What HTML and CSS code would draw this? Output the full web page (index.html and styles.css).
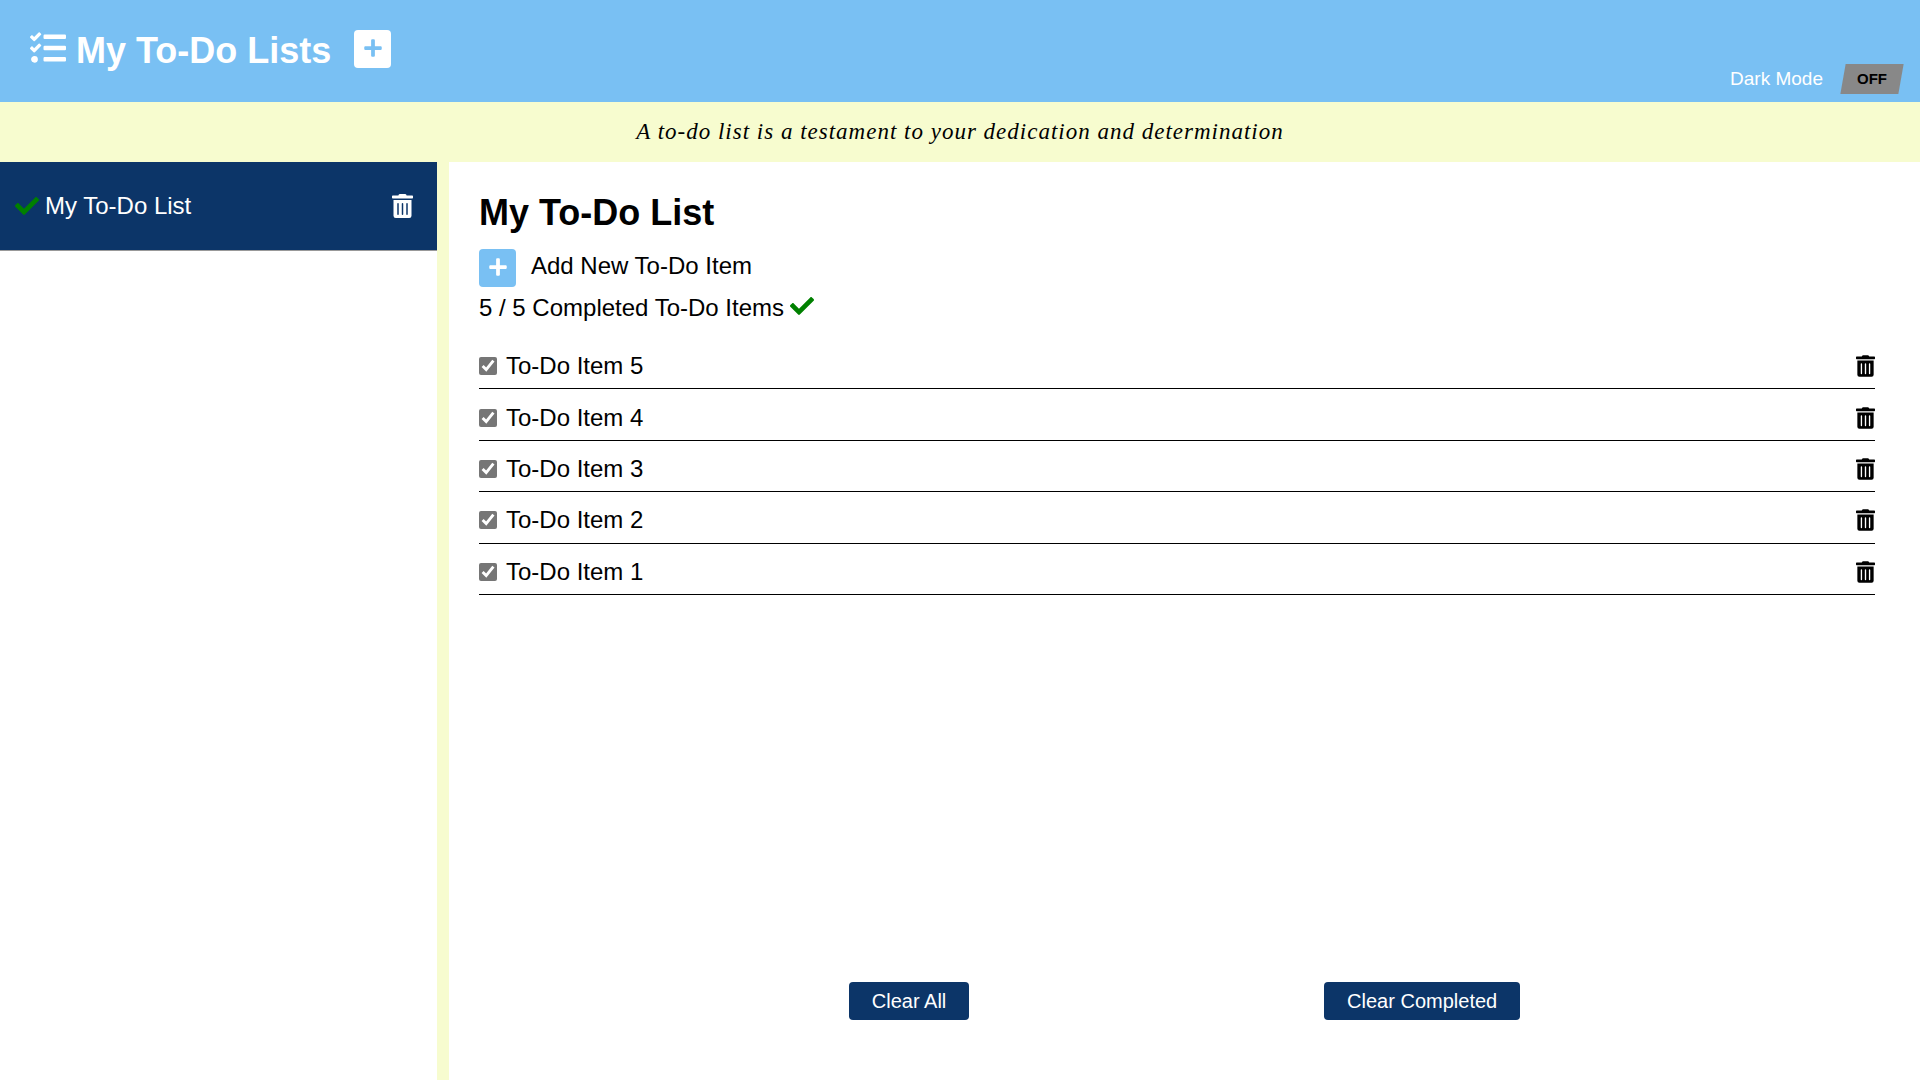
FILE: index.html
```html
<!DOCTYPE html>
<html lang="en">
<head>
<meta charset="utf-8">
<meta name="viewport" content="width=device-width, initial-scale=1">
<title>My To-Do Lists</title>
<link rel="stylesheet" href="styles.css">
</head>
<body>
<svg class="sprite" aria-hidden="true">
  <symbol id="tasks" viewBox="0 0 512 512"><path d="M139.61 35.5a12 12 0 0 0-17 0L58.93 98.81l-22.7-22.12a12 12 0 0 0-17 0L3.53 92.41a12 12 0 0 0 0 17l47.59 47.4a12.78 12.78 0 0 0 17.61 0l15.59-15.62L156.52 69a12.09 12.09 0 0 0 .09-17zm0 159.19a12 12 0 0 0-17 0l-63.68 63.72-22.7-22.1a12 12 0 0 0-17 0L3.53 252a12 12 0 0 0 0 17L51 316.5a12.77 12.77 0 0 0 17.6 0l15.7-15.69 72.2-72.22a12 12 0 0 0 .09-16.9zM64 368c-26.49 0-48.59 21.5-48.59 48S37.53 464 64 464a48 48 0 0 0 0-96zm432 16H208a16 16 0 0 0-16 16v32a16 16 0 0 0 16 16h288a16 16 0 0 0 16-16v-32a16 16 0 0 0-16-16zm0-320H208a16 16 0 0 0-16 16v32a16 16 0 0 0 16 16h288a16 16 0 0 0 16-16V80a16 16 0 0 0-16-16zm0 160H208a16 16 0 0 0-16 16v32a16 16 0 0 0 16 16h288a16 16 0 0 0 16-16v-32a16 16 0 0 0-16-16z"/></symbol>
  <symbol id="plus" viewBox="0 0 448 512"><path d="M416 208H272V64c0-17.67-14.33-32-32-32h-32c-17.67 0-32 14.33-32 32v144H32c-17.67 0-32 14.33-32 32v32c0 17.67 14.33 32 32 32h144v144c0 17.67 14.33 32 32 32h32c17.67 0 32-14.33 32-32V304h144c17.67 0 32-14.33 32-32v-32c0-17.67-14.33-32-32-32z"/></symbol>
  <symbol id="check" viewBox="0 0 512 512"><path d="M173.898 439.404l-166.4-166.4c-9.997-9.997-9.997-26.206 0-36.204l36.203-36.204c9.997-9.998 26.207-9.998 36.204 0L192 312.69 432.095 72.596c9.997-9.997 26.207-9.997 36.204 0l36.203 36.204c9.997 9.997 9.997 26.206 0 36.204l-294.4 294.401c-9.998 9.997-26.207 9.997-36.204-.001z"/></symbol>
  <symbol id="trash" viewBox="0 0 448 512"><path d="M32 464a48 48 0 0 0 48 48h288a48 48 0 0 0 48-48V128H32zm272-256a16 16 0 0 1 32 0v224a16 16 0 0 1-32 0zm-96 0a16 16 0 0 1 32 0v224a16 16 0 0 1-32 0zm-96 0a16 16 0 0 1 32 0v224a16 16 0 0 1-32 0zM432 32H312l-9.4-18.7A24 24 0 0 0 281.1 0H166.8a23.72 23.72 0 0 0-21.4 13.3L136 32H16A16 16 0 0 0 0 48v32a16 16 0 0 0 16 16h416a16 16 0 0 0 16-16V48a16 16 0 0 0-16-16z"/></symbol>
</svg>

<header class="header">
  <div class="brand">
    <svg class="brand-icon" aria-hidden="true"><use href="#tasks"/></svg>
    <h1>My To-Do Lists</h1>
    <button class="add add-light" type="button" aria-label="Add list"><svg class="plus-icon"><use href="#plus"/></svg></button>
  </div>
  <div class="mode">
    <span id="mode-label">Dark Mode</span>
    <button class="toggle" type="button" role="switch" aria-checked="false" aria-labelledby="mode-label"><span>OFF</span></button>
  </div>
</header>

<p class="quote">A to-do list is a testament to your dedication and determination</p>

<div class="layout">
  <nav class="sidebar" aria-label="Lists">
    <div class="list-entry">
      <svg class="check-icon" aria-hidden="true"><use href="#check"/></svg>
      <a href="#list">My To-Do List</a>
      <button class="icon-button" type="button" aria-label="Delete list"><svg class="trash-large"><use href="#trash"/></svg></button>
    </div>
  </nav>

  <main class="content" id="list">
    <h2>My To-Do List</h2>
    <div class="add-row">
      <button class="add add-blue" type="button" aria-labelledby="add-label"><svg class="plus-icon"><use href="#plus"/></svg></button>
      <span id="add-label">Add New To-Do Item</span>
    </div>
    <p class="progress">5 / 5 Completed To-Do Items <svg class="check-icon" aria-hidden="true"><use href="#check"/></svg></p>
    <ul class="items">
      <li><input type="checkbox" id="item5" checked><label for="item5">To-Do Item 5</label><button class="icon-button" type="button" aria-label="Delete To-Do Item 5"><svg class="trash-small"><use href="#trash"/></svg></button></li>
      <li><input type="checkbox" id="item4" checked><label for="item4">To-Do Item 4</label><button class="icon-button" type="button" aria-label="Delete To-Do Item 4"><svg class="trash-small"><use href="#trash"/></svg></button></li>
      <li><input type="checkbox" id="item3" checked><label for="item3">To-Do Item 3</label><button class="icon-button" type="button" aria-label="Delete To-Do Item 3"><svg class="trash-small"><use href="#trash"/></svg></button></li>
      <li><input type="checkbox" id="item2" checked><label for="item2">To-Do Item 2</label><button class="icon-button" type="button" aria-label="Delete To-Do Item 2"><svg class="trash-small"><use href="#trash"/></svg></button></li>
      <li><input type="checkbox" id="item1" checked><label for="item1">To-Do Item 1</label><button class="icon-button" type="button" aria-label="Delete To-Do Item 1"><svg class="trash-small"><use href="#trash"/></svg></button></li>
    </ul>
    <div class="actions">
      <button class="clear" type="button">Clear All</button>
      <button class="clear" type="button">Clear Completed</button>
    </div>
  </main>
</div>
</body>
</html>
```
FILE: styles.css
```css
* {
  box-sizing: border-box;
  margin: 0;
  padding: 0;
}

body {
  display: flex;
  flex-direction: column;
  min-height: 100vh;
  background: #f7fccf;
  color: #000;
  font: 24px/28px "Liberation Sans", Arial, sans-serif;
}

button {
  border: 0;
  font: inherit;
  cursor: pointer;
}

svg {
  display: block;
  flex: none;
  fill: currentColor;
}

.sprite {
  position: absolute;
  width: 0;
  height: 0;
}

.header {
  display: flex;
  justify-content: space-between;
  padding: 30px 19px 8px 30px;
  background: #79c0f3;
  color: #fff;
}

.brand {
  display: flex;
  align-items: flex-start;
  padding-bottom: 22px;
}

.brand-icon {
  width: 36px;
  height: 36px;
}

h1,
h2 {
  font-size: 36px;
  line-height: 42px;
}

h1 {
  margin: 0 23px 0 10px;
}

.add {
  display: grid;
  place-items: center;
  width: 37px;
  height: 38px;
  padding-bottom: 2px;
  border-radius: 4px;
}

.add-light {
  background: #fff;
  color: #79c0f3;
}

.add-blue {
  background: #79c0f3;
  color: #fff;
}

.plus-icon {
  width: 18px;
  height: 20px;
}

.mode {
  display: flex;
  align-items: center;
  align-self: flex-end;
  gap: 20px;
  font-size: 19px;
}

.toggle {
  width: 58px;
  height: 30px;
  background: #888;
  color: #000;
  font-size: 15px;
  font-weight: bold;
  line-height: 28px;
  transform: skew(-10deg);
}

.toggle span {
  display: block;
  transform: skew(10deg);
}

.quote {
  padding: 16px;
  font: italic 23px/28px "Liberation Serif", "Times New Roman", serif;
  letter-spacing: 1px;
  text-align: center;
}

.layout {
  display: grid;
  flex: 1;
  grid-template-columns: 437fr 1471fr;
  column-gap: 12px;
}

.sidebar,
.content {
  background: #fff;
}

.list-entry {
  display: flex;
  align-items: center;
  gap: 6px;
  padding: 30px 24px 30px 15px;
  border-bottom: 1px solid #999;
  background: #0c3568;
  color: #fff;
}

.list-entry a {
  flex: 1;
  color: inherit;
  text-decoration: none;
}

.check-icon {
  width: 24px;
  height: 24px;
  fill: green;
}

.icon-button {
  background: none;
  color: inherit;
}

.trash-large {
  width: 21px;
  height: 24px;
}

.trash-small {
  width: 19px;
  height: 22px;
}

.content {
  display: flex;
  flex-direction: column;
  padding: 30px 45px 60px 30px;
}

.add-row {
  display: flex;
  gap: 15px;
  margin: 15px 0 7px;
}

.add-row span {
  padding-top: 3px;
}

.progress {
  display: flex;
  gap: 6px;
}

.items {
  display: grid;
  grid-auto-rows: 1fr;
  min-height: 257px;
  margin-top: 16px;
  list-style: none;
}

.items li {
  display: flex;
  align-items: center;
  border-bottom: 1px solid #000;
  padding-top: 6px;
}

.items input {
  width: 18px;
  height: 18px;
  margin-right: 9px;
  accent-color: #767676;
}

.items label {
  flex: 1;
}

.actions {
  display: flex;
  justify-content: space-evenly;
  margin-top: auto;
  padding-left: 15px;
}

.clear {
  padding: 5px 23px;
  border-radius: 4px;
  background: #0c3568;
  color: #fff;
  font-size: 20px;
}
```
